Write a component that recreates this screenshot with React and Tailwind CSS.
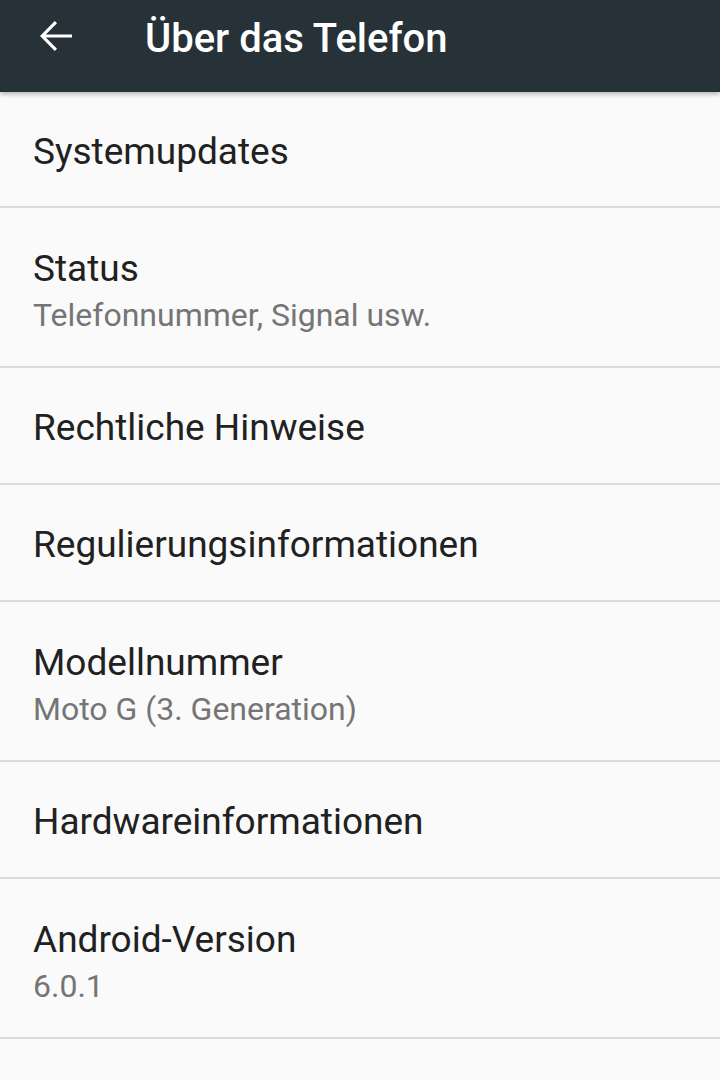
import React from "react";

const items = [
  { title: "Systemupdates", h: "h-[114px]" },
  { title: "Status", sub: "Telefonnummer, Signal usw." },
  { title: "Rechtliche Hinweise" },
  { title: "Regulierungsinformationen" },
  { title: "Modellnummer", sub: "Moto G (3. Generation)" },
  { title: "Hardwareinformationen" },
  { title: "Android-Version", sub: "6.0.1" },
];

function BackArrow() {
  return (
    <svg width="48" height="48" viewBox="0 0 24 24" fill="#fff">
      <path d="M20 11.2H6.9l5.6-5.6L11.4 4.5 4 12l7.4 7.5 1.1-1.1-5.6-5.6H20v-1.6z" />
    </svg>
  );
}

function Row({ item }) {
  if (item.sub) {
    return (
      <div className="h-[158px] pt-[37px] pl-[33px]">
        <div className="text-[37px] leading-[47px] text-[#212121]">{item.title}</div>
        <div className="text-[32px] leading-[47px] text-[#757575]">{item.sub}</div>
      </div>
    );
  }
  return (
    <div className={`${item.h || "h-[115px]"} flex items-center pl-[33px] pt-[4px]`}>
      <div className="text-[37px] leading-[47px] text-[#212121]">{item.title}</div>
    </div>
  );
}

export default function App() {
  return (
    <div className="relative h-[1080px] w-[720px] overflow-hidden bg-[#fafafa] font-['Roboto',sans-serif]">
      <header className="relative z-10 flex h-[92px] items-start bg-[#263238] shadow-[0_2px_5px_rgba(0,0,0,0.3)]">
        <div className="pl-[32px] pt-[12px]">
          <BackArrow />
        </div>
        <h1 className="pl-[65px] pt-[19px] text-[40px] leading-[40px] font-medium text-white">Über das Telefon</h1>
      </header>
      {items.map((item) => (
        <div key={item.title}>
          <Row item={item} />
          <div className="h-[2px] bg-[#dcdcdc]" />
        </div>
      ))}
    </div>
  );
}
